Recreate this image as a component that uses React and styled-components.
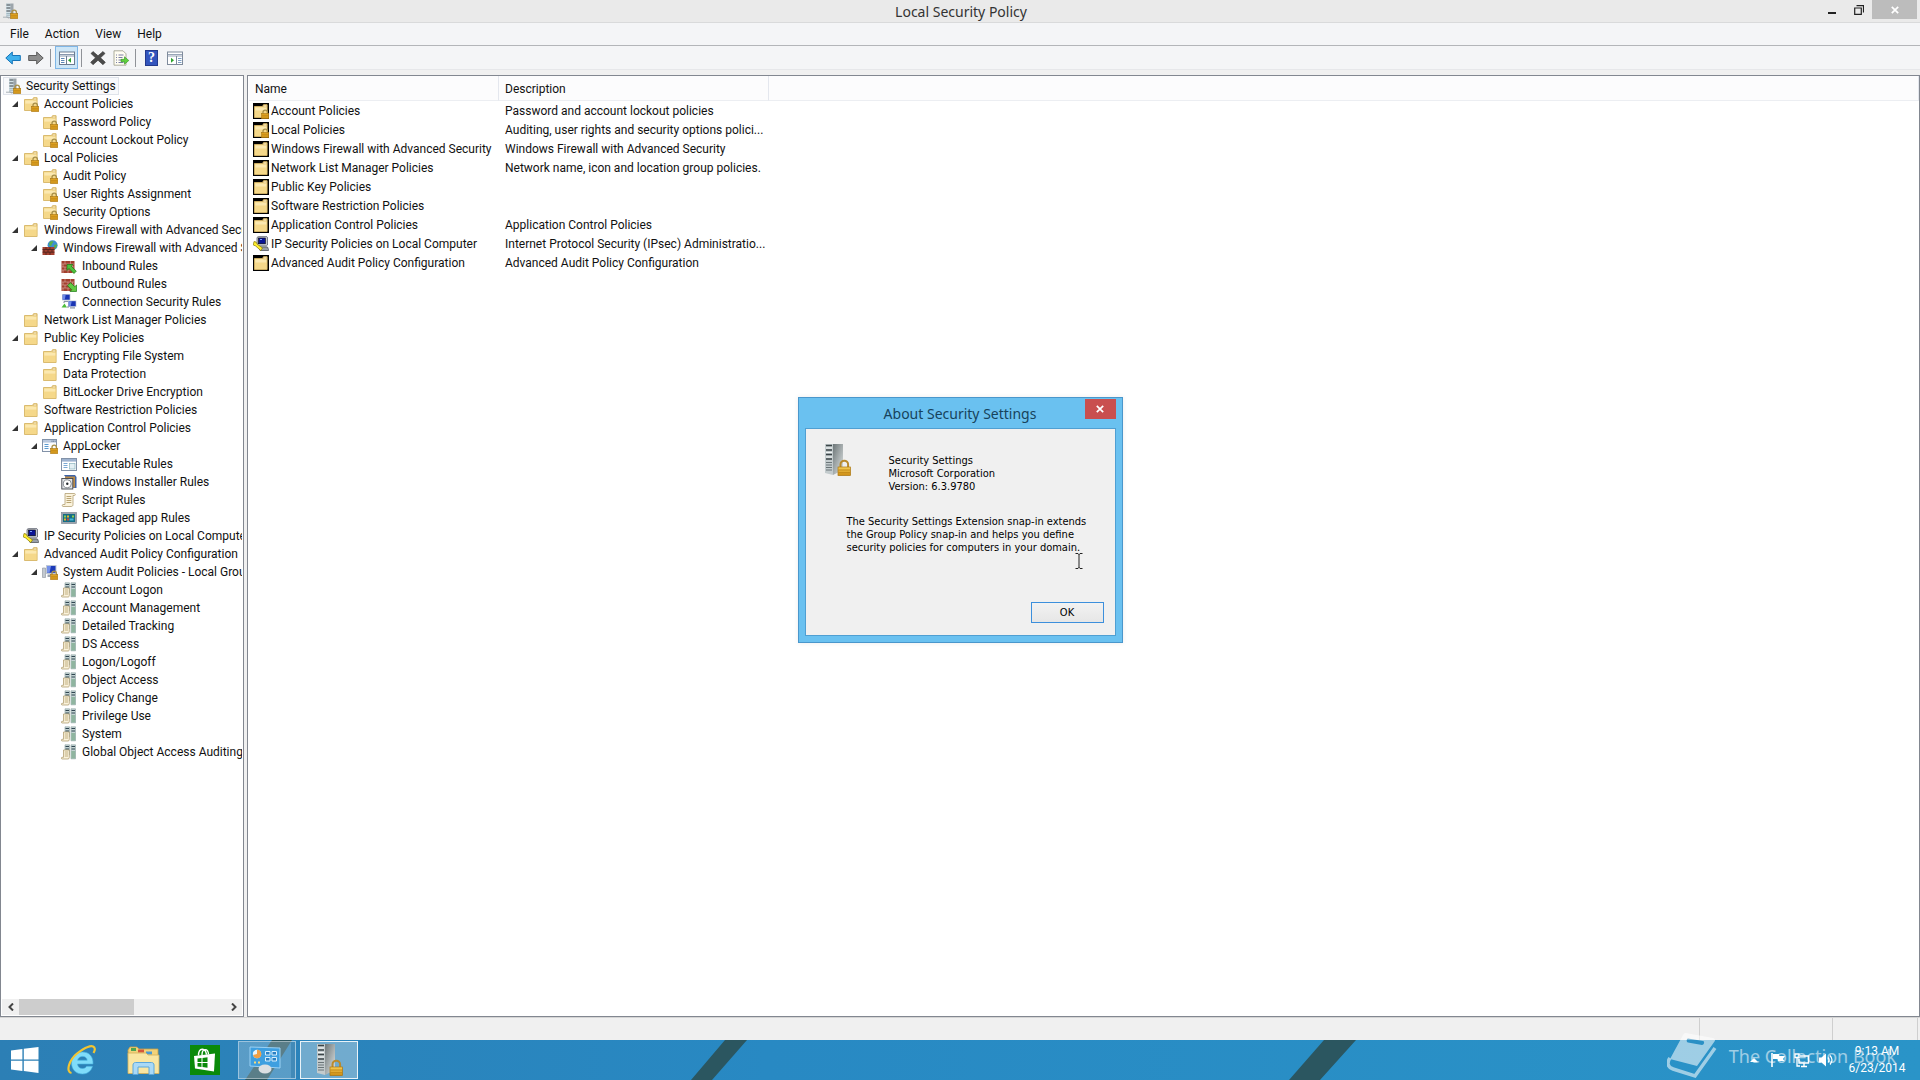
import React, { useState } from "react";
import styled, { createGlobalStyle, css } from "styled-components";

const ui = 'Roboto, "Noto Sans", sans-serif';
const titleFont = '"Noto Sans", "Open Sans", sans-serif';
const dialogFont = '"DejaVu Sans Condensed", "DejaVu Sans", sans-serif';

const palette = {
    chrome: "#eaeaea",
    bar: "#f4f5f7",
    face: "#f0f0f0",
    border: "#828790",
    text: "#111111",
    sky: "#6ac1f0",
    task: "#2a8fc5",
};

const treeRows = [
    { depth: 0, icon: "server", text: "Security Settings", selected: true },
    { depth: 1, icon: "folderLock", text: "Account Policies", open: true },
    { depth: 2, icon: "folderLock", text: "Password Policy" },
    { depth: 2, icon: "folderLock", text: "Account Lockout Policy" },
    { depth: 1, icon: "folderLock", text: "Local Policies", open: true },
    { depth: 2, icon: "folderLock", text: "Audit Policy" },
    { depth: 2, icon: "folderLock", text: "User Rights Assignment" },
    { depth: 2, icon: "folderLock", text: "Security Options" },
    { depth: 1, icon: "folder", text: "Windows Firewall with Advanced Security", open: true },
    { depth: 2, icon: "firewall", text: "Windows Firewall with Advanced Security", open: true },
    { depth: 3, icon: "inbound", text: "Inbound Rules" },
    { depth: 3, icon: "outbound", text: "Outbound Rules" },
    { depth: 3, icon: "connection", text: "Connection Security Rules" },
    { depth: 1, icon: "folder", text: "Network List Manager Policies" },
    { depth: 1, icon: "folder", text: "Public Key Policies", open: true },
    { depth: 2, icon: "folder", text: "Encrypting File System" },
    { depth: 2, icon: "folder", text: "Data Protection" },
    { depth: 2, icon: "folder", text: "BitLocker Drive Encryption" },
    { depth: 1, icon: "folder", text: "Software Restriction Policies" },
    { depth: 1, icon: "folder", text: "Application Control Policies", open: true },
    { depth: 2, icon: "appLocker", text: "AppLocker", open: true },
    { depth: 3, icon: "executable", text: "Executable Rules" },
    { depth: 3, icon: "installer", text: "Windows Installer Rules" },
    { depth: 3, icon: "script", text: "Script Rules" },
    { depth: 3, icon: "packaged", text: "Packaged app Rules" },
    { depth: 1, icon: "ipsec", text: "IP Security Policies on Local Computer" },
    { depth: 1, icon: "folder", text: "Advanced Audit Policy Configuration", open: true },
    { depth: 2, icon: "audit", text: "System Audit Policies - Local Group Policy", open: true },
    { depth: 3, icon: "subject", text: "Account Logon" },
    { depth: 3, icon: "subject", text: "Account Management" },
    { depth: 3, icon: "subject", text: "Detailed Tracking" },
    { depth: 3, icon: "subject", text: "DS Access" },
    { depth: 3, icon: "subject", text: "Logon/Logoff" },
    { depth: 3, icon: "subject", text: "Object Access" },
    { depth: 3, icon: "subject", text: "Policy Change" },
    { depth: 3, icon: "subject", text: "Privilege Use" },
    { depth: 3, icon: "subject", text: "System" },
    { depth: 3, icon: "subject", text: "Global Object Access Auditing" },
];

const listRows = [
    { icon: "folderLock", name: "Account Policies", desc: "Password and account lockout policies" },
    { icon: "folderLock", name: "Local Policies", desc: "Auditing, user rights and security options polici..." },
    { icon: "folder", name: "Windows Firewall with Advanced Security", desc: "Windows Firewall with Advanced Security" },
    { icon: "folder", name: "Network List Manager Policies", desc: "Network name, icon and location group policies." },
    { icon: "folder", name: "Public Key Policies", desc: "" },
    { icon: "folder", name: "Software Restriction Policies", desc: "" },
    { icon: "folder", name: "Application Control Policies", desc: "Application Control Policies" },
    { icon: "ipsec", name: "IP Security Policies on Local Computer", desc: "Internet Protocol Security (IPsec) Administratio..." },
    { icon: "folder", name: "Advanced Audit Policy Configuration", desc: "Advanced Audit Policy Configuration" },
];

/* ---------- icons, all on a 16px grid ---------- */

const Lock = () => (
    <g>
        <path d="M10 11V9.3a2.2 2.2 0 0 1 4.4 0V11" fill="none" stroke="#a8904a" strokeWidth="1.3" />
        <rect x="8.6" y="10.6" width="7.2" height="5" fill="#dfa423" stroke="#a9740f" strokeWidth=".6" />
        <path d="M9 12.4h6.4M9 14h6.4" stroke="#b87e12" strokeWidth=".6" />
    </g>
);

const Folder = () => (
    <g>
        <path d="M1.5 3.5h8l1-1.8h3.6v12.8H1.5z" fill="#f7dc8c" stroke="#d6b566" strokeWidth=".9" />
        <path d="M2.3 4.6h11v9.2h-11z" fill="#f5d88a" />
        <path d="M2.3 4.6h11v3h-11z" fill="#fbe8b0" />
        <path d="M10.8 2.2h2.8v1.6h-3.4z" fill="#fffbe8" stroke="#cfa64c" strokeWidth=".5" />
    </g>
);

const Bricks = () => (
    <g>
        <rect x="0.5" y="3" width="13" height="12" fill="#a33f2e" />
        <path d="M0.5 6h13M0.5 9h13M0.5 12h13M4 3v3M9.5 3v3M2 6v3M7 6v3M11.5 6v3M4 9v3M9.5 9v3M2 12v3M7 12v3M11.5 12v3" stroke="#d8b0a6" strokeWidth=".6" />
    </g>
);

const Screen = ({ x, y }) => (
    <g transform={`translate(${x} ${y})`}>
        <rect width="8.4" height="6.4" fill="#c6cedb" />
        <rect x=".7" y=".7" width="7" height="5" fill="#1b35b4" />
        <path d="M.7.7h3l-1 5h-2z" fill="#6f8be8" />
        <rect x="2" y="6.8" width="5" height="1.2" fill="#8b95a6" />
    </g>
);

const Tower = () => (
    <g>
        <path d="M4 .4h7.5V13l-5 2.4L4 14z" fill="#9da5ab" />
        <path d="M4 .4h4.5v14L4 13.6z" fill="#d4e2e8" />
        <path d="M4.4 2h4M4.4 5h4M4.4 8h4" stroke="#3c4248" strokeWidth="1" />
        <path d="M4.4 10.5h4M4.4 12.2h4" stroke="#8ba3ae" strokeWidth=".7" />
        <path d="M1 14.2h5l3 .9" stroke="#a7b0b5" fill="none" />
    </g>
);

const WindowFrame = () => (
    <g>
        <rect x=".5" y="1.5" width="14" height="12" fill="#fbfcfe" stroke="#8292a8" />
        <rect x="1" y="2" width="13" height="2.6" fill="#b8c8de" />
        <path d="M9.5 3.2h1M11.2 3.2h1M12.8 3.2h.8" stroke="#50617c" strokeWidth="1" />
        <path d="M2.5 6.5h4M2.5 8.5h4M2.5 10.5h4" stroke="#5a9ad0" strokeWidth="1" />
    </g>
);

const glyphs = {
    server: <g><Tower /><Lock /></g>,
    folder: <Folder />,
    folderLock: <g><Folder /><Lock /></g>,
    firewall: (
        <g>
            <circle cx="10.6" cy="5.2" r="5" fill="#3d8fd0" />
            <path d="M7.5 2.5c1-1.5 3-1.5 4-.8l-1.5 2-1 2.5-2-1zM12 5l2.7-.8c.6 1.8-.5 4-2.2 5z" fill="#58b24a" />
            <path d="M.5 7h12v8H.5z" fill="#a33f2e" />
            <path d="M.5 9.5h12M.5 12.2h12M4 7v2.5M8 7v2.5M2 9.5v2.7M6 9.5v2.7M10 9.5v2.7M4 12.2V15M8 12.2V15" stroke="#40201a" strokeWidth=".7" />
        </g>
    ),
    inbound: (
        <g>
            <Bricks />
            <path d="M6 6.5h6l-1.7 1.7 5 5-2.3 2.3-5-5L6 12.5z" fill="#4fc13c" stroke="#1d7a14" strokeWidth=".7" />
        </g>
    ),
    outbound: (
        <g>
            <Bricks />
            <path d="M15.5 15.5V9l-1.7 1.7-4.3-4-3 3 4.3 4L9 15.5z" fill="#63c944" stroke="#1d7a14" strokeWidth=".7" />
        </g>
    ),
    connection: (
        <g>
            <Screen x="1" y="0" />
            <Screen x="7" y="6.5" />
            <path d="M.5 13.5l3-4 2.5 4z" fill="#4ebd3b" />
            <path d="M3 9V7.5M6 13h2" stroke="#7a8797" />
        </g>
    ),
    appLocker: <g><WindowFrame /><Lock /></g>,
    executable: (
        <g>
            <rect x=".5" y="2.5" width="15" height="12" fill="#fff" stroke="#8292a8" />
            <rect x="1" y="3" width="14" height="2.6" fill="#9db2cf" />
            <path d="M2.5 7.5h4M2.5 9.5h4M2.5 11.5h4" stroke="#7ba9d4" />
            <rect x="8.5" y="7.5" width="5.5" height="5.5" fill="#e4f0f4" stroke="#7ba9b4" strokeWidth=".6" />
        </g>
    ),
    installer: (
        <g>
            <path d="M3 1h11l1.5 2v11h-3z" fill="#3d63a8" />
            <path d="M4 2.5h10v11H4z" fill="#b98b4a" />
            <rect x=".8" y="4.5" width="11" height="10.5" fill="#e2e5e8" stroke="#42464c" strokeWidth=".9" />
            <circle cx="6.3" cy="9.8" r="4" fill="#fff" stroke="#6d737a" strokeWidth=".8" />
            <circle cx="6.3" cy="9.8" r="1.2" fill="#23272c" />
        </g>
    ),
    script: (
        <g>
            <path d="M4 1.5h9.5c1 0 1 2 0 2H12v9c0 1.5-.8 2-2 2H2c-1 0-1-2 0-2h2z" fill="#fbf3dc" stroke="#b29f73" strokeWidth=".8" />
            <path d="M5.5 4.5h4.8M5.5 6.5h4.8M5.5 8.5h4.8M5.5 10.5h4.8" stroke="#a88f58" strokeWidth=".8" />
        </g>
    ),
    packaged: (
        <g>
            <rect x=".5" y="2.5" width="15" height="11" fill="#9aa3ad" stroke="#77818c" strokeWidth=".6" />
            <rect x="2" y="4" width="12" height="8" fill="#156d86" />
            <path d="M3 5.5h2v2H3zM11 5.5h2v2h-2z" fill="#8ccf4f" />
            <path d="M6 5.5h2v2H6zM3 8.5h2v2H3z" fill="#e6b32b" />
            <path d="M8.5 8.5h4v2h-4z" fill="#43b7d8" />
            <path d="M6 8.5h2v2H6z" fill="#cf4d3a" />
        </g>
    ),
    ipsec: (
        <g>
            <path d="M4 1.5L5.5.3H13l1.5 1V9l-1.2 1H4z" fill="#c7cbd3" stroke="#4a4e5c" strokeWidth=".7" />
            <rect x="5.5" y="2" width="6.8" height="5.8" fill="#0a1496" stroke="#000" strokeWidth=".6" />
            <path d="M7 3.5h2" stroke="#7fa4ff" />
            <path d="M6 11h8.5l1 2.5v1H7z" fill="#9aa0a8" stroke="#41454c" strokeWidth=".7" />
            <path d="M1 5.5l2 .5 1.2 2.2L9.5 12l-1.8 2.5-5-4.5L.3 9z" fill="#ffee2e" stroke="#877800" strokeWidth=".7" />
        </g>
    ),
    audit: (
        <g>
            <path d="M.5 4h3v9.5h-3z" fill="#c3c9d0" stroke="#8b929b" strokeWidth=".6" />
            <rect x="4" y="1" width="10.5" height="9" fill="#bfc8d6" />
            <rect x="5" y="2" width="8.5" height="6.8" fill="#1c3ab8" />
            <path d="M5 2h4L7.5 8.8H5z" fill="#7390ea" />
            <path d="M5.5 10.5h3V13h-3z" fill="#9aa3ae" />
            <Lock />
        </g>
    ),
    subject: (
        <g>
            <path d="M4 .8h4.5v10H4zM10 .8h4.5v14H10z" fill="#c3d3d2" stroke="#8a9ea0" strokeWidth=".6" />
            <path d="M4.5 2.5H8M10.5 2.5H14M4.5 5H8M10.5 5H14" stroke="#2f4450" strokeWidth="1.1" />
            <path d="M10.3 7h4v7.5h-4z" fill="#8fb5a0" />
            <path d="M2.5 6h5.8v7.5c0 1-.5 1.5-1.3 1.5H1c-.8 0-.8-1.7 0-1.7h1.5z" fill="#fbf3dc" stroke="#a89463" strokeWidth=".7" />
            <path d="M3.7 8H7M3.7 10H7M3.7 12H7" stroke="#a88f58" strokeWidth=".7" />
        </g>
    ),
    back: <path d="M.8 8l6.5-6v3.5h8v5h-8V14z" fill="#3fb0ec" stroke="#1574b8" strokeWidth="1" />,
    forward: <path d="M15.2 8L8.7 2v3.5h-8v5h8V14z" fill="#8d8d8d" stroke="#5c5c5c" strokeWidth="1" />,
    showTree: (
        <g>
            <rect x=".5" y="2" width="15" height="12.5" fill="#fff" stroke="#6c7c92" />
            <path d="M1 4.5h14M1 6h14" stroke="#8797ad" />
            <path d="M7.5 6v8.5" stroke="#6c7c92" />
            <path d="M2 8.5h3.5M2 10.5h3.5M2 12.5h3.5" stroke="#5d86b5" />
            <path d="M12 7.8v5l-3-2.5z" fill="#2da32d" />
        </g>
    ),
    remove: <path d="M3 1.5l5 4.3 5-4.3 2 2-4.5 4.3 4.8 4.5-2.3 2.4L8 10.2l-5 4.5-2.3-2.4 4.8-4.5L1 3.5z" fill="#4b4b4b" stroke="#333" strokeWidth=".6" />,
    exportList: (
        <g>
            <path d="M1 .8h9l3 3v11.4H1z" fill="#fffdf2" stroke="#9a9a86" strokeWidth=".8" />
            <path d="M3 5h1M5.5 5h5M3 7.5h1M5.5 7.5h4M3 10h1M5.5 10h4M3 12.5h1M5.5 12.5h5" stroke="#6b6f9c" strokeWidth=".9" />
            <path d="M8 9.3h3.5V6.8l4.3 3.7-4.3 3.7v-2.5H8z" fill="#5fd13e" stroke="#2f8f1c" strokeWidth=".6" />
        </g>
    ),
    actionPane: (
        <g>
            <rect x=".5" y="2" width="15" height="12.5" fill="#fff" stroke="#7f8b9c" />
            <path d="M1 4.5h14M1 6h14" stroke="#98a5b7" />
            <path d="M9.5 6v8.5" stroke="#7f8b9c" />
            <path d="M11 8.5h3.5M11 10.5h3.5M11 12.5h3.5" stroke="#7d9fc5" />
            <path d="M4 7.8v5l3-2.5z" fill="#2da32d" />
        </g>
    ),
};

const Icon = ({ name, size = 16 }) => (
    <IconSvg width={size} height={size} viewBox="0 0 16 16" aria-hidden="true">
        {glyphs[name]}
    </IconSvg>
);

const BigServer = ({ size }) => (
    <IconSvg width={size} height={size} viewBox="-3 0 32 32" aria-hidden="true">
        <defs>
            <linearGradient id="side" x1="0" x2="1" y1="0" y2="1">
                <stop offset="0" stopColor="#6d7678" />
                <stop offset="1" stopColor="#dfe4e4" />
            </linearGradient>
            <linearGradient id="gold" x1="0" x2="0" y1="0" y2="1">
                <stop offset="0" stopColor="#f6cf58" />
                <stop offset="1" stopColor="#cf8d12" />
            </linearGradient>
        </defs>
        <path d="M9 0h10v26L9 31z" fill="url(#side)" />
        <path d="M1 0h8v31l-8-2z" fill="#c3cbcd" />
        <path d="M2 1.5h6M2 6h6M2 10.5h6M2 15h6" stroke="#3b4447" strokeWidth="1.6" />
        <path d="M2 4h6M2 8.5h6M2 13h6" stroke="#f2f5f5" strokeWidth="1" />
        <path d="M2 18.5h6M2 21h6M2 23.5h6M2 26h6" stroke="#6b7578" strokeWidth="1" />
        <path d="M16.5 24v-3.5a3.800 3.800 0 0 1 7.600 0V24" fill="none" stroke="#b98a2c" strokeWidth="2" />
        <rect x="14" y="23" width="12.5" height="8.5" fill="url(#gold)" stroke="#a9740f" strokeWidth=".7" />
        <path d="M14.5 26H26M14.5 28.7H26" stroke="#b5790d" strokeWidth=".7" />
    </IconSvg>
);

const StartLogo = () => (
    <IconSvg width="28" height="26" viewBox="0 0 28 26" aria-hidden="true">
        <path d="M0 3.6L11.4 2v10.4H0zM12.8 1.8L27.5 0v12.4H12.8zM0 13.7h11.4v10.4L0 22.5zM12.8 13.7h14.7V26l-14.7-2z" fill="#fff" />
    </IconSvg>
);

const ExplorerBrowser = () => (
    <IconSvg width="30" height="30" viewBox="0 0 30 30" aria-hidden="true">
        <path d="M27 19H11.5c.3 3 2.3 4.5 5 4.5 2 0 3.3-.8 4-2.200h6C25.300 26 21.500 29 16.500 29 10 29 5.500 24.500 5.500 18S10 7 16.500 7 27.500 11.500 27 19zM11.600 15.200h9.600c-.3-2.300-2-3.800-4.600-3.800s-4.500 1.500-5 3.800z" fill="#7fdcfa" stroke="#45b2e0" strokeWidth=".6" />
        <path d="M5.5 28C-.5 27 3 15 11 8.5S26-.5 28.3 2.5c.9 1.5.4 3.6-.8 5.5" fill="none" stroke="#f3c531" strokeWidth="2.2" />
    </IconSvg>
);

const FileExplorer = () => (
    <IconSvg width="33" height="30" viewBox="0 0 33 30" aria-hidden="true">
        <path d="M1 5l2-3h7l2 2h19v24H2z" fill="#f1d27a" stroke="#c79f45" strokeWidth=".8" />
        <path d="M4 3h5v3H4z" fill="#4ea552" />
        <path d="M11 4.5h6v3h-6z" fill="#d5573b" />
        <path d="M19 6.5h6v3h-6z" fill="#4a9ad4" />
        <path d="M1 8h18l2 2h11v18.5H1z" fill="#f9e6a2" stroke="#d3b05a" strokeWidth=".8" />
        <path d="M6 29.5V20c0-1.5 1-2.5 2.5-2.5h16c1.5 0 2.5 1 2.5 2.5v9.5h-5V22H11v7.5z" fill="#a9d9f6" stroke="#5ba7dc" strokeWidth="1" />
    </IconSvg>
);

const StoreTile = () => (
    <IconSvg width="30" height="30" viewBox="0 0 30 30" aria-hidden="true">
        <rect width="30" height="30" fill="#0a8a0a" />
        <path d="M4 11l21-2.5-1 18L5 23.5z" fill="#fff" />
        <path d="M8.5 10.5c0-8 7-8.5 8-.8M12 10c0-7 6-7 6.500-.6" fill="none" stroke="#fff" strokeWidth="1.4" />
        <path d="M7.5 13.5l4-.5v4h-4zM12.5 12.9l5-.6V17h-5zM7.5 18h4v4l-4-.5zM12.5 18h5v4.800l-5-.7z" fill="#0a8a0a" />
    </IconSvg>
);

const ControlPanel = () => (
    <IconSvg width="32" height="30" viewBox="0 0 32 30" aria-hidden="true">
        <path d="M1 2l30 1v20L1 21z" fill="#3e9fe0" stroke="#9ad1f4" strokeWidth="1" />
        <circle cx="8" cy="9" r="4.2" fill="#e6f3fb" />
        <path d="M8 9V4.800A4.200 4.200 0 1 1 4 10z" fill="#f0a046" />
        <path d="M16.5 6.5h4.500v3.500h-4.500zM23 6.5h4.500v3.500H23zM16.5 12.5h4.500V16h-4.500zM23 12.5h4.500V16H23z" fill="#2a80c4" stroke="#d6eefc" strokeWidth="1" />
        <path d="M5 17.5h2M9 17.5h2" stroke="#f5d97c" strokeWidth="2" />
        <ellipse cx="16" cy="24" rx="6.5" ry="4.5" fill="#dcdfe2" />
    </IconSvg>
);

const BookMark = () => (
    <IconSvg width="50" height="47" viewBox="0 0 50 47" aria-hidden="true">
        <path d="M19 1l27 5c2 .5 2.5 2 1.5 3.5L30 34 3 27 16 3c.8-1.5 1.5-2.2 3-2z" fill="#ffffff" />
        <path d="M3 26c-3 4-3 9 3 11l22 7 20-28" fill="none" stroke="#ffffff" strokeWidth="3.5" />
        <path d="M21 6.5l15 2.5c2 .5 1 4-1 4l-14-2.5c-2-.5-1.5-4 0-4z" fill={palette.task} />
    </IconSvg>
);

const TrayGlyphs = () => (
    <>
        <TrayButton aria-label="Show hidden icons">
            <svg width="8" height="4" viewBox="0 0 8 4"><path d="M0 4l4-4 4 4z" fill="#fff" /></svg>
        </TrayButton>
        <TrayButton aria-label="Action Center">
            <svg width="16" height="16" viewBox="0 0 16 16">
                <path d="M2 1v14" stroke="#fff" strokeWidth="1.6" />
                <path d="M3 2h6v2h6l-2 3 1.5 2H8V7H3z" fill="#fff" />
            </svg>
        </TrayButton>
        <TrayButton aria-label="Network">
            <svg width="16" height="16" viewBox="0 0 16 16" fill="none" stroke="#fff">
                <path d="M6 4h8.5v7H5V7M7 14.5h6M10 11v3.5" strokeWidth="1.4" />
                <path d="M1 2h4v3.5H1zM3 5.5V14h3" strokeWidth="1.3" />
            </svg>
        </TrayButton>
        <TrayButton aria-label="Volume">
            <svg width="16" height="16" viewBox="0 0 16 16">
                <path d="M1 5.5h2.5L8 1.5v13l-4.5-4H1z" fill="#fff" />
                <path d="M10 5.5c1.3 1.5 1.3 3.500 0 5M12 3.5c2.4 2.7 2.4 6.300 0 9" fill="none" stroke="#fff" strokeWidth="1.2" />
            </svg>
        </TrayButton>
    </>
);

const CloseGlyph = () => (
    <svg width="8" height="8" viewBox="0 0 8 8" aria-hidden="true">
        <path d="M.8.8l6.4 6.4M7.2.8L.8 7.2" stroke="#fff" strokeWidth="1.7" />
    </svg>
);

/* ---------- parts ---------- */

function Tree() {
    return (
        <TreePane>
            <TreeList>
                {treeRows.map((row, i) => (
                    <TreeRow key={i} $depth={row.depth}>
                        {row.depth > 0 && (
                            <Toggle aria-label={`Collapse ${row.text}`} disabled={!row.open}>
                                {row.open && (
                                    <svg width="6" height="6" viewBox="0 0 6 6"><path d="M6 0v6H0z" fill="#333" /></svg>
                                )}
                            </Toggle>
                        )}
                        <TreeLabel $selected={row.selected}>
                            <Icon name={row.icon} />
                            <span>{row.text}</span>
                        </TreeLabel>
                    </TreeRow>
                ))}
            </TreeList>
            <ScrollBar>
                <ScrollArrow aria-label="Scroll left">
                    <svg width="6" height="8" viewBox="0 0 6 8"><path d="M5 .5L1.5 4 5 7.5" fill="none" stroke="#444" strokeWidth="2" /></svg>
                </ScrollArrow>
                <ScrollTrack><ScrollThumb /></ScrollTrack>
                <ScrollArrow aria-label="Scroll right">
                    <svg width="6" height="8" viewBox="0 0 6 8"><path d="M1 .5L4.5 4 1 7.5" fill="none" stroke="#444" strokeWidth="2" /></svg>
                </ScrollArrow>
            </ScrollBar>
        </TreePane>
    );
}

function PolicyList() {
    return (
        <ListPane>
            <Table>
                <colgroup>
                    <NameCol />
                    <DescCol />
                    <col />
                </colgroup>
                <thead>
                    <tr>
                        <HeadCell scope="col">Name</HeadCell>
                        <HeadCell scope="col">Description</HeadCell>
                        <HeadCell as="td" />
                    </tr>
                </thead>
                <tbody>
                    {listRows.map((row) => (
                        <tr key={row.name}>
                            <Cell>
                                <NameBox>
                                    <IconPlate $boxed={row.icon !== "ipsec"}>
                                        <Icon name={row.icon} />
                                    </IconPlate>
                                    {row.name}
                                </NameBox>
                            </Cell>
                            <Cell>{row.desc}</Cell>
                            <Cell />
                        </tr>
                    ))}
                </tbody>
            </Table>
        </ListPane>
    );
}

function AboutDialog({ onClose }) {
    return (
        <DialogLayer>
            <Dialog role="dialog" aria-labelledby="about-title">
                <DialogHead>
                    <DialogTitle id="about-title">About Security Settings</DialogTitle>
                    <DialogClose aria-label="Close" onClick={onClose}><CloseGlyph /></DialogClose>
                </DialogHead>
                <DialogBody>
                    <AboutHead>
                        <BigServer size={32} />
                        <AboutLines>
                            <span>Security Settings</span>
                            <span>Microsoft Corporation</span>
                            <span>Version: 6.3.9780</span>
                        </AboutLines>
                    </AboutHead>
                    <AboutText>
                        The Security Settings Extension snap-in extends<br />
                        the Group Policy snap-in and helps you define<br />
                        security policies for computers in your domain.
                    </AboutText>
                    <TextCursor width="8" height="16" viewBox="0 0 8 16" aria-hidden="true">
                        <path d="M.5.5H3l1 1 1-1h2.5M4 1v14M.5 15.5H3l1-1 1 1h2.5" fill="none" stroke="#222" />
                    </TextCursor>
                    <OkButton onClick={onClose}>OK</OkButton>
                </DialogBody>
            </Dialog>
        </DialogLayer>
    );
}

function Taskbar() {
    return (
        <TaskbarBox>
            {/* wallpaper showing through the glass */}
            <Streaks viewBox="0 0 1920 40" preserveAspectRatio="none" aria-hidden="true">
                <path d="M272 0h20l-25 40h-22zM725 0h22l-35 40h-21zM1324 0h32l-36 40h-31z" fill="#2b5660" />
            </Streaks>
            <TaskButton aria-label="Start" $width={50}><StartLogo /></TaskButton>
            <TaskButton aria-label="Internet Explorer" $width={62}><ExplorerBrowser /></TaskButton>
            <TaskButton aria-label="File Explorer" $width={62}><FileExplorer /></TaskButton>
            <TaskButton aria-label="Store" $width={62}><StoreTile /></TaskButton>
            <TaskWindows>
                <TaskWindow aria-label="Control Panel" $stacked><ControlPanel /></TaskWindow>
                <TaskWindow aria-label="Local Security Policy" $active><BigServer size={32} /></TaskWindow>
            </TaskWindows>
            <Watermark>
                <BookMark />
                <span>The Collection Book</span>
            </Watermark>
            <Tray>
                <TrayGlyphs />
                <Clock>
                    <span>9:13 AM</span>
                    <span>6/23/2014</span>
                </Clock>
            </Tray>
        </TaskbarBox>
    );
}

function App() {
    const [aboutOpen, setAboutOpen] = useState(true);

    return (
        <Desktop>
            <GlobalStyle />
            <WindowArea>
                <TitleBar>
                    <Icon name="server" />
                    <Title>Local Security Policy</Title>
                    <WindowButtons>
                        <WindowButton aria-label="Minimize">
                            <svg width="8" height="10" viewBox="0 0 8 10"><path d="M0 7h8v2H0z" fill="#222" /></svg>
                        </WindowButton>
                        <WindowButton aria-label="Restore">
                            <svg width="10" height="10" viewBox="0 0 10 10"><path d="M.7 3h6.6v6.3H.7zM2.5.6h7v6.900" fill="none" stroke="#222" strokeWidth="1.2" /></svg>
                        </WindowButton>
                        <WindowButton aria-label="Close" $close><CloseGlyph /></WindowButton>
                    </WindowButtons>
                </TitleBar>
                <MenuBar>
                    <MenuItem>File</MenuItem>
                    <MenuItem>Action</MenuItem>
                    <MenuItem>View</MenuItem>
                    <MenuItem onClick={() => setAboutOpen(true)}>Help</MenuItem>
                </MenuBar>
                <ToolBar>
                    <ToolButton aria-label="Back"><Icon name="back" /></ToolButton>
                    <ToolButton aria-label="Forward"><Icon name="forward" /></ToolButton>
                    <ToolDivider />
                    <ToolButton aria-label="Show console tree" $pressed><Icon name="showTree" /></ToolButton>
                    <ToolDivider />
                    <ToolButton aria-label="Delete"><Icon name="remove" /></ToolButton>
                    <ToolButton aria-label="Export list"><Icon name="exportList" /></ToolButton>
                    <ToolDivider />
                    <ToolButton aria-label="Help"><HelpBadge>?</HelpBadge></ToolButton>
                    <ToolButton aria-label="Show action pane"><Icon name="actionPane" /></ToolButton>
                </ToolBar>
                <Panes>
                    <Tree />
                    <PolicyList />
                </Panes>
                <StatusBar>
                    <StatusCell $width={133} />
                    <StatusCell $width={85} />
                    <StatusCell $width={3} />
                </StatusBar>
                {aboutOpen && <AboutDialog onClose={() => setAboutOpen(false)} />}
            </WindowArea>
            <Taskbar />
        </Desktop>
    );
}

const GlobalStyle = createGlobalStyle`
    * {
        box-sizing: border-box;
    }

    body {
        margin: 0;
        font-family: ${ui};
        font-size: 12px;
        color: ${palette.text};
    }

    button {
        margin: 0;
        padding: 0;
        border: 0;
        background: transparent;
        font: inherit;
        color: inherit;
    }
`

const Desktop = styled.div`
    display: flex;
    flex-direction: column;
    width: 100%;
    height: 100vh;
    overflow: hidden;
`

const WindowArea = styled.div`
    position: relative;
    flex: 1;
    min-height: 0;
    display: flex;
    flex-direction: column;
    background: ${palette.face};
`

const IconSvg = styled.svg`
    display: block;
    flex-shrink: 0;
`

// 제목 표시줄
const TitleBar = styled.header`
    display: grid;
    grid-template-columns: 1fr auto 1fr;
    align-items: center;
    height: 23px;
    padding-left: 2px;
    background: ${palette.chrome};
    border-bottom: 1px solid #d9dadb;
`

const Title = styled.h1`
    margin: 0;
    padding-top: 1px;
    font-family: ${titleFont};
    font-size: 14px;
    line-height: 21px;
    font-weight: 400;
    color: #333;
`

const WindowButtons = styled.div`
    display: flex;
    align-self: start;
    justify-self: end;
    padding-right: 3px;
`

const WindowButton = styled.button`
    display: flex;
    align-items: center;
    justify-content: center;
    width: ${(props) => (props.$close ? "45px" : "27px")};
    height: 19px;
    background: ${(props) => (props.$close ? "#bcbcbc" : "transparent")};
`

const MenuBar = styled.nav`
    display: flex;
    align-items: center;
    height: 23px;
    padding-left: 2px;
    background: ${palette.bar};
    border-bottom: 1px solid #b3b5b9;
`

const MenuItem = styled.button`
    padding: 0 8px;
    line-height: 20px;
`

const ToolBar = styled.div`
    display: flex;
    align-items: center;
    height: 24px;
    padding-left: 1px;
    background: ${palette.bar};
    border-bottom: 1px solid #e6e7ea;
`

const ToolButton = styled.button`
    display: flex;
    align-items: center;
    justify-content: center;
    width: 23px;
    height: 23px;

    ${(props) => props.$pressed && css`
        background: #cde6f7;
        border: 1px solid #7fb6e6;
    `}
`

const ToolDivider = styled.span`
    width: 1px;
    height: 18px;
    margin: 0 4px 0 3px;
    background: #8f9298;
`

const HelpBadge = styled.span`
    width: 13px;
    height: 16px;
    background: #3355bd;
    border: 1px solid #23398c;
    font-family: "Liberation Serif", serif;
    font-size: 14px;
    font-weight: 700;
    line-height: 14px;
    color: #fff;
`

const Panes = styled.main`
    flex: 1;
    min-height: 0;
    display: flex;
    gap: 3px;
    padding-top: 5px;
`

const pane = css`
    background: #fff;
    border: 1px solid ${palette.border};
`

const TreePane = styled.aside`
    ${pane}
    display: flex;
    flex-direction: column;
    flex-shrink: 0;
    width: 244px;
    padding: 1px;
`

const TreeList = styled.ul`
    flex: 1;
    min-height: 0;
    overflow: hidden;
    margin: 0;
    padding: 0;
    list-style: none;
`

const TreeRow = styled.li`
    display: flex;
    align-items: center;
    height: 18px;
    padding-left: ${(props) => (props.$depth ? (props.$depth - 1) * 19 + 6 : 1)}px;
    white-space: nowrap;
`

const Toggle = styled.button`
    display: flex;
    align-items: center;
    justify-content: center;
    flex-shrink: 0;
    width: 13px;
    height: 18px;
`

const TreeLabel = styled.span`
    display: flex;
    align-items: center;
    gap: 5px;
    height: 18px;
    padding: 0 3px 0 2px;
    line-height: 16px;

    ${(props) => props.$selected && css`
        background: #f8f9fb;
        box-shadow: inset 0 0 0 1px #dfe3ea;
    `}
`

const ScrollBar = styled.div`
    display: flex;
    height: 16px;
    background: ${palette.face};
`

const ScrollArrow = styled.button`
    display: flex;
    align-items: center;
    justify-content: center;
    width: 17px;
`

const ScrollTrack = styled.div`
    flex: 1;
`

const ScrollThumb = styled.div`
    width: 56%;
    height: 100%;
    background: #cdcdcd;
`

const ListPane = styled.section`
    ${pane}
    flex: 1;
    min-width: 0;
    padding-left: 1px;
    overflow: hidden;
`

const Table = styled.table`
    width: 100%;
    table-layout: fixed;
    border-collapse: separate;
    border-spacing: 0;
`

const NameCol = styled.col`
    width: 250px;
`

const DescCol = styled.col`
    width: 270px;
`

const HeadCell = styled.th`
    height: 25px;
    padding: 1px 6px 0;
    background: #fcfcfd;
    border-right: 1px solid #e4e7ee;
    border-bottom: 1px solid #eceef2;
    text-align: left;
    font-weight: 400;
    line-height: 16px;
`

const Cell = styled.td`
    height: 19px;
    padding: 0 6px;
    line-height: 16px;
    white-space: nowrap;
    vertical-align: middle;
`

const NameBox = styled.div`
    display: flex;
    align-items: center;
    gap: 2px;
    margin-left: -2px;
`

// black mask left behind the folder bitmaps
const IconPlate = styled.span`
    width: 16px;
    height: 16px;
    background: ${(props) => (props.$boxed ? "#000" : "transparent")};
`

const StatusBar = styled.footer`
    display: flex;
    justify-content: flex-end;
    height: 23px;
    border-top: 1px solid #d5d5d5;
`

const StatusCell = styled.span`
    width: ${(props) => props.$width}px;
    border-left: 1px solid #cfcfcf;
`

const DialogLayer = styled.div`
    position: absolute;
    inset: 0;
    display: flex;
    align-items: center;
    justify-content: center;
`

const Dialog = styled.div`
    width: 325px;
    padding: 1px 6px 6px;
    background: ${palette.sky};
    border: 1px solid #4a97cc;
    box-shadow: 0 0 5px rgba(0, 0, 0, 0.08);
`

const DialogHead = styled.div`
    display: grid;
    grid-template-columns: 31px 1fr 31px;
    height: 29px;
`

const DialogTitle = styled.h2`
    grid-column: 2;
    margin: 0;
    text-align: center;
    font-family: ${titleFont};
    font-size: 14px;
    font-weight: 400;
    line-height: 30px;
    color: #17435c;
`

const DialogClose = styled.button`
    display: flex;
    align-items: center;
    justify-content: center;
    height: 20px;
    background: #c94f4f;
`

const DialogBody = styled.div`
    position: relative;
    display: flex;
    flex-direction: column;
    height: 208px;
    padding: 15px 11px 12px 15px;
    background: ${palette.face};
    border: 1px solid #4f9fd2;
    font-family: ${dialogFont};
    font-size: 11px;
    line-height: 13px;
    color: #000;
`

const AboutHead = styled.div`
    display: flex;
    gap: 36px;
`

const AboutLines = styled.div`
    display: flex;
    flex-direction: column;
    padding-top: 10px;
`

const AboutText = styled.p`
    margin: 22px 0 0 26px;
    white-space: nowrap;
`

const TextCursor = styled.svg`
    position: absolute;
    right: 32px;
    top: 124px;
`

const OkButton = styled.button`
    align-self: flex-end;
    width: 73px;
    height: 21px;
    margin-top: auto;
    background: linear-gradient(#f2f2f2, #e6e6e6);
    border: 1px solid #3c8fdc;
`

const TaskbarBox = styled.footer`
    position: relative;
    display: flex;
    flex-shrink: 0;
    height: 40px;
    background: linear-gradient(90deg, #2c7fb5, #2889c3 40%, #2a94c8);
    color: #fff;
`

const Streaks = styled.svg`
    position: absolute;
    inset: 0;
    width: 100%;
    height: 100%;
`

const TaskButton = styled.button`
    position: relative;
    display: flex;
    align-items: center;
    justify-content: center;
    width: ${(props) => props.$width}px;
`

const TaskWindows = styled.div`
    position: relative;
    display: flex;
    gap: 4px;
    padding: 1px 2px;
`

const TaskWindow = styled.button`
    display: flex;
    align-items: center;
    justify-content: center;
    width: 58px;
    background: rgba(200, 220, 230, ${(props) => (props.$active ? 0.45 : 0.3)});
    border: 1px solid rgba(255, 255, 255, ${(props) => (props.$active ? 0.85 : 0.4)});
    ${(props) => props.$stacked && css`
        padding-right: 5px;
        box-shadow: inset -4px 0 0 rgba(42, 120, 170, 0.5);
    `}
`

const Tray = styled.div`
    position: relative;
    display: flex;
    align-items: center;
    margin-left: auto;
`

const TrayButton = styled.button`
    display: flex;
    align-items: center;
    justify-content: center;
    width: 24px;
    height: 40px;
`

const Clock = styled.time`
    display: flex;
    flex-direction: column;
    width: 78px;
    margin-right: 4px;
    text-align: center;
    line-height: 17px;
`

const Watermark = styled.div`
    position: absolute;
    right: 24px;
    bottom: 1px;
    display: flex;
    align-items: center;
    gap: 12px;
    opacity: 0.55;
    font-family: ${titleFont};
    font-size: 18px;
    line-height: 46px;
    white-space: nowrap;
`

export default App;
